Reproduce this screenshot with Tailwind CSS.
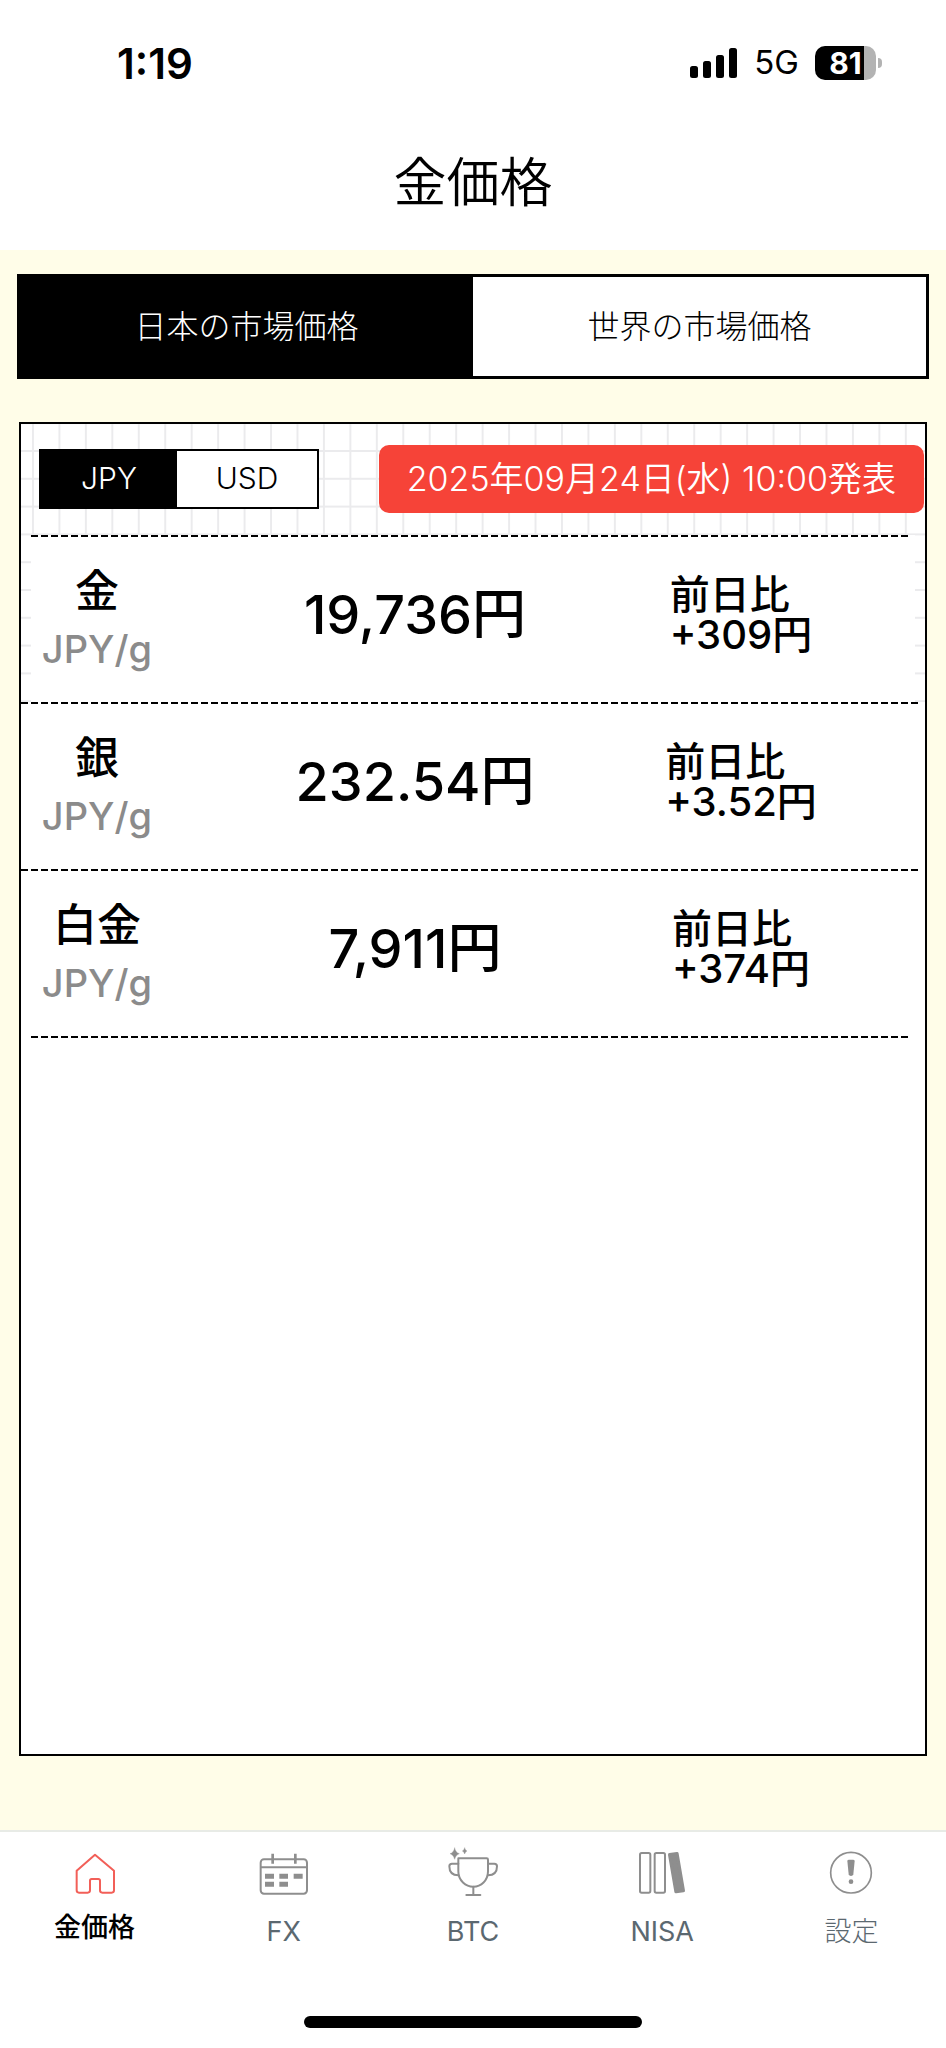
<!DOCTYPE html>
<html lang="ja">
<head>
    <meta charset="UTF-8">
    <meta name="viewport" content="width=device-width, initial-scale=1.0">
    <title>金価格</title>
    <script src="https://cdn.jsdelivr.net/npm/@tailwindcss/browser@4"></script>
</head>
<body class="flex min-h-screen flex-col bg-[#fffde8] font-['Inter','Noto_Sans_CJK_JP',sans-serif] text-black">

    <!-- Status bar + title -->
    <header class="h-[250px] bg-white">
        <div class="flex h-[126px] items-center justify-between pr-16 pl-[117px]">
            <span class="text-[42px] font-semibold">1:19</span>
            <div class="flex items-center">
                <svg class="h-8 w-12" viewBox="0 0 48 32" aria-hidden="true">
                    <rect x="0" y="19" width="8" height="12" rx="2.5"/>
                    <rect x="13" y="14" width="8" height="17" rx="2.5"/>
                    <rect x="26" y="8" width="8" height="23" rx="2.5"/>
                    <rect x="39" y="1" width="8" height="30" rx="2.5"/>
                </svg>
                <span class="ml-4 text-[33px]">5G</span>
                <div class="ml-4 flex h-[34px] w-[61px] items-center justify-center rounded-[10px] bg-linear-to-r from-black from-80% to-[#b3b3b3] to-80% text-[30px] font-bold text-white">81</div>
                <div class="ml-0.5 h-2.5 w-1 rounded-r-full bg-[#b3b3b3]"></div>
            </div>
        </div>
        <h1 class="pt-4 text-center text-[53px] leading-[82px] font-[350]">金価格</h1>
    </header>

    <main class="flex flex-1 flex-col px-[19px] pt-6 pb-[74px]">
        <!-- Market tabs -->
        <div class="-mx-0.5 flex h-[105px] border-[3px] border-black bg-white text-[32px] font-light">
            <button class="flex-1 bg-black text-white">日本の市場価格</button>
            <button class="flex-1">世界の市場価格</button>
        </div>

        <!-- Price card -->
        <section class="relative isolate mt-[43px] flex-1 border-2 border-black bg-white">
            <svg class="absolute top-0 left-0 -z-10 h-[278px] w-full" aria-hidden="true">
                <defs>
                    <pattern id="grid" x="11" y="26" width="26.45" height="27.8" patternUnits="userSpaceOnUse">
                        <path d="M1 0V27.8M0 1H26.45" stroke="#ebebed" stroke-width="2"/>
                    </pattern>
                </defs>
                <rect width="100%" height="100%" fill="url(#grid)"/>
            </svg>

            <div class="flex h-[111px] items-center justify-between pr-px pb-0.5 pl-[18px] font-[350]">
                <div class="flex h-[60px] w-[280px] border-2 border-black bg-white text-[30px]">
                    <button class="w-[136px] bg-black text-white">JPY</button>
                    <button class="flex-1">USD</button>
                </div>
                <p class="rounded-[10px] bg-[#f64338] px-7 text-[34px] leading-[68px] whitespace-nowrap text-white">2025年09月24日(水) 10:00発表</p>
            </div>

            <table class="block font-medium">
                <tbody id="priceRows" class="block"></tbody>
            </table>
            <div class="mx-[10px] h-0.5 bg-[repeating-linear-gradient(to_right,#000_0_7px,transparent_7px_10px)] bg-[length:calc(100%-4px)_2px] bg-no-repeat"></div>
        </section>
    </main>

    <!-- Bottom navigation -->
    <nav class="border-t-2 border-[#e8ebe6] bg-white">
        <div class="grid h-[184px] grid-cols-5 text-[27px] text-[#5b6870]">
            <a href="#" class="flex flex-col items-center pt-4 font-medium text-black">
                <svg class="size-[50px]" viewBox="0 0 150 150" fill="none" stroke="#f25f58" stroke-width="6" stroke-linejoin="round" aria-hidden="true">
                    <path d="M75 20 20 68V127Q20 134 27 134H53Q60 134 60 127V98Q60 93 65 93H85Q90 93 90 98V127Q90 134 97 134H125Q132 134 132 127V68Z"/>
                </svg>
                <span class="mt-3 leading-9">金価格</span>
            </a>
            <a href="#" class="flex flex-col items-center pt-4">
                <svg class="size-[50px]" viewBox="0 0 150 150" fill="none" stroke="#8e8e8e" stroke-width="6" aria-hidden="true">
                    <rect x="5" y="34" width="139" height="103" rx="10"/>
                    <path d="M5 58H144"/>
                    <path d="M41 17V47M109 17V47" stroke-width="8"/>
                    <path d="M18 85H45M61 85H87M104 85H131M18 109H45M61 109H87" stroke-width="15"/>
                </svg>
                <span class="mt-4 leading-9">FX</span>
            </a>
            <a href="#" class="flex flex-col items-center pt-4">
                <svg class="size-[50px] overflow-visible" viewBox="0 0 150 150" fill="none" stroke="#8e8e8e" stroke-width="6" stroke-linecap="round" stroke-linejoin="round" aria-hidden="true">
                    <path d="M31 31H116Q120 31 120 35V70C120 98 99 116 76 116S31 98 31 70Z"/>
                    <path d="M31 47H12Q4 47 4 55C4 72 12 82 31 82M120 47H139Q147 47 147 55C147 72 139 82 120 82M76 116V141M55 141H97"/>
                    <path d="M20 0Q23 14 34 17Q23 20 20 34Q17 20 6 17Q17 14 20 0ZM50 0Q52 7 57 9Q52 11 50 18Q48 11 43 9Q48 7 50 0Z" fill="#8e8e8e" stroke-width="1"/>
                </svg>
                <span class="mt-4 leading-9">BTC</span>
            </a>
            <a href="#" class="flex flex-col items-center pt-4">
                <svg class="size-[50px]" viewBox="0 0 150 150" fill="none" stroke="#8e8e8e" stroke-width="6" stroke-linejoin="round" aria-hidden="true">
                    <rect x="9" y="15" width="31" height="119" rx="5"/>
                    <rect x="53" y="15" width="31" height="119" rx="5"/>
                    <path d="M98 20 120 17 139 128 117 131Z" fill="#8e8e8e" stroke-width="10"/>
                </svg>
                <span class="mt-4 leading-9">NISA</span>
            </a>
            <a href="#" class="flex flex-col items-center pt-4">
                <svg class="size-[50px]" viewBox="0 0 150 150" fill="#8e8e8e" aria-hidden="true">
                    <circle cx="75" cy="74" r="61" fill="none" stroke="#8e8e8e" stroke-width="5"/>
                    <path d="M64 39Q64 35 69 35H81Q86 35 86 39L82 79Q81 84 75 84T68 79Z"/>
                    <circle cx="75" cy="101" r="7"/>
                </svg>
                <span class="mt-4 leading-9 font-light">設定</span>
            </a>
        </div>
        <div class="mx-auto mb-5 h-3 w-[338px] rounded-full bg-black"></div>
    </nav>

    <script>
        const metals = [
            { name: "金", unit: "JPY/g", price: "19,736円", change: "+309円" },
            { name: "銀", unit: "JPY/g", price: "232.54円", change: "+3.52円" },
            { name: "白金", unit: "JPY/g", price: "7,911円", change: "+374円" }
        ];

        // The first row is inset, the others run the full width of the card
        const firstRow = "mx-[10px] pr-[90px]";
        const otherRow = "pr-[100px] pl-[10px]";

        document.getElementById('priceRows').innerHTML = metals.map((m, i) => `
            <tr class="grid h-[167px] grid-cols-[132px_1fr_168px] items-center bg-white bg-[repeating-linear-gradient(to_right,#000_0_7px,transparent_7px_10px)] bg-[length:calc(100%-4px)_2px] bg-no-repeat ${i === 0 ? firstRow : otherRow}">
                <th scope="row" class="pt-0.5 text-center text-[44px] leading-[58px] font-medium">
                    ${m.name}<span class="block text-[38px] text-[#8b8b8b]">${m.unit}</span>
                </th>
                <td class="pb-2 pl-[10px] text-center text-[54px]">${m.price}</td>
                <td class="flex justify-center pb-2 text-[40px] leading-10 whitespace-nowrap">
                    <div>前日比<br>${m.change}</div>
                </td>
            </tr>`).join('');
    </script>
</body>
</html>
